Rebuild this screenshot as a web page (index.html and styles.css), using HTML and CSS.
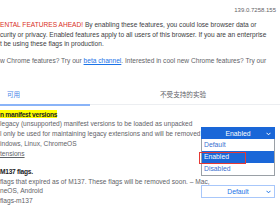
FILE: index.html
```html
<!DOCTYPE html>
<html lang="zh-CN">
<head>
<meta charset="utf-8">
<title>Experiments</title>
<link rel="stylesheet" href="styles.css">
</head>
<body>
<div class="page">
  <div class="version">139.0.7258.155</div>
  <p class="warning">
    <span class="line"><span class="alert">ENTAL FEATURES AHEAD!</span> By enabling these features, you could lose browser data or</span>
    <span class="line">curity or privacy. Enabled features apply to all users of this browser. If you are an enterprise</span>
    <span class="line">t be using these flags in production.</span>
  </p>
  <p class="promo"><span class="line">w Chrome features? Try our <a class="link" href="#">beta channel</a>. Interested in cool new Chrome features? Try our</span></p>

  <div class="tabs">
    <div class="tab active">可用</div>
    <div class="tab">不受支持的实验</div>
  </div>

  <div class="experiment first">
    <div class="exp-text">
      <div class="exp-title"><mark class="hl">n manifest versions</mark></div>
      <div class="exp-desc">
        <span class="line">legacy (unsupported) manifest versions to be loaded as unpacked</span>
        <span class="line">l only be used for maintaining legacy extensions and will be removed</span>
      </div>
      <div class="exp-platforms">indows, Linux, ChromeOS</div>
      <div class="exp-link"><a class="perma" href="#">tensions</a></div>
    </div>
    <div class="exp-control">
      <div class="select enabled">Enabled
        <svg class="chev" width="5" height="4" viewBox="0 0 5 4"><polyline points="0.5,0.8 2.5,2.8 4.5,0.8" fill="none" stroke="#fff" stroke-width="1"/></svg>
      </div>
      <ul class="menu">
        <li class="opt">Default</li>
        <li class="opt sel">Enabled</li>
        <li class="opt">Disabled</li>
      </ul>
      <div class="mark-box"></div>
    </div>
  </div>

  <div class="experiment second">
    <div class="exp-text">
      <div class="exp-title">M137 flags.</div>
      <div class="exp-desc">
        <span class="line">flags that expired as of M137. These flags will be removed soon. – Mac,</span>
      </div>
      <div class="exp-platforms">neOS, Android</div>
      <div class="exp-link plain">flags-m137</div>
    </div>
    <div class="exp-control">
      <div class="select">Default
        <svg class="chev" width="5" height="4" viewBox="0 0 5 4"><polyline points="0.5,0.8 2.5,2.8 4.5,0.8" fill="none" stroke="#1a73e8" stroke-width="1"/></svg>
      </div>
    </div>
  </div>
</div>
</body>
</html>
```

FILE: styles.css
```css
* { box-sizing: border-box; }
html, body { margin: 0; padding: 0; background: #fff; }
body {
  font-family: "Liberation Sans", Arial, "Noto Sans CJK SC", sans-serif;
  font-size: 6.6px;
  color: #5f6368;
}
.page { width: 280px; height: 210px; overflow: hidden; position: relative; }
.line { display: block; white-space: nowrap; }
p { margin: 0; }

.version {
  height: 20px;
  line-height: 20px;
  text-align: right;
  padding-right: 4px;
  font-size: 6px;
  color: #5f6368;
}
.warning {
  margin-top: 0.25px;
  line-height: 9.5px;
  color: #3c4043;
}
.alert { color: #d93025; }
.promo {
  margin-top: 7.5px;
  line-height: 9.5px;
  color: #5f6368;
}
.link { color: #1a73e8; text-decoration: underline; }

.tabs {
  margin-top: 18.25px;
  display: flex;
  height: 21px;
  border-bottom: 1px solid #eceef1;
  font-family: "Noto Sans CJK SC", sans-serif;
  font-size: 6.6px;
}
.tab {
  line-height: 21px;
  color: #5f6368;
}
.tab.active {
  width: 90px;
  padding-left: 7px;
  color: #4a86e8;
  border-bottom: 2px solid #8ab4f8;
  height: 22px;
}
.tab:not(.active) { padding-left: 70px; }

.experiment { display: flex; }
.experiment.first { margin-top: 4px; line-height: 10px; }
.experiment.second { margin-top: 8px; line-height: 9.5px; }
.exp-text { flex: 1; white-space: nowrap; min-width: 0; }
.exp-title { color: #202124; font-weight: bold; letter-spacing: -0.25px; }
.hl { background: #ffff00; color: #202124; padding: 0.5px 0; }
.perma { color: #5f6368; text-decoration: underline; }

.exp-control {
  width: 74px;
  margin-right: 5px;
  margin-top: 18px;
  position: relative;
}
.select {
  height: 13px;
  line-height: 12px;
  text-align: center;
  border: 1px solid #a8c7fa;
  color: #1a73e8;
  font-size: 6.8px;
  position: relative;
}
.select.enabled {
  background: #1a67d8;
  border-color: #1a67d8;
  color: #fff;
}
.chev { position: absolute; right: 3px; top: 4px; }

.menu {
  position: absolute;
  top: 12px;
  left: 0;
  width: 74px;
  margin: 0;
  padding: 0;
  list-style: none;
  background: #fff;
  border: 1px solid #9aa0a6;
  border-top: none;
}
.opt {
  height: 12px;
  line-height: 12px;
  padding-left: 2px;
  color: #3b6fd0;
  font-size: 6.8px;
}
.opt.sel { background: #1a67d8; color: #fff; }
.mark-box {
  position: absolute;
  top: 25px;
  left: -2px;
  width: 47px;
  height: 12px;
  border: 1.5px solid #e53935;
}
```
